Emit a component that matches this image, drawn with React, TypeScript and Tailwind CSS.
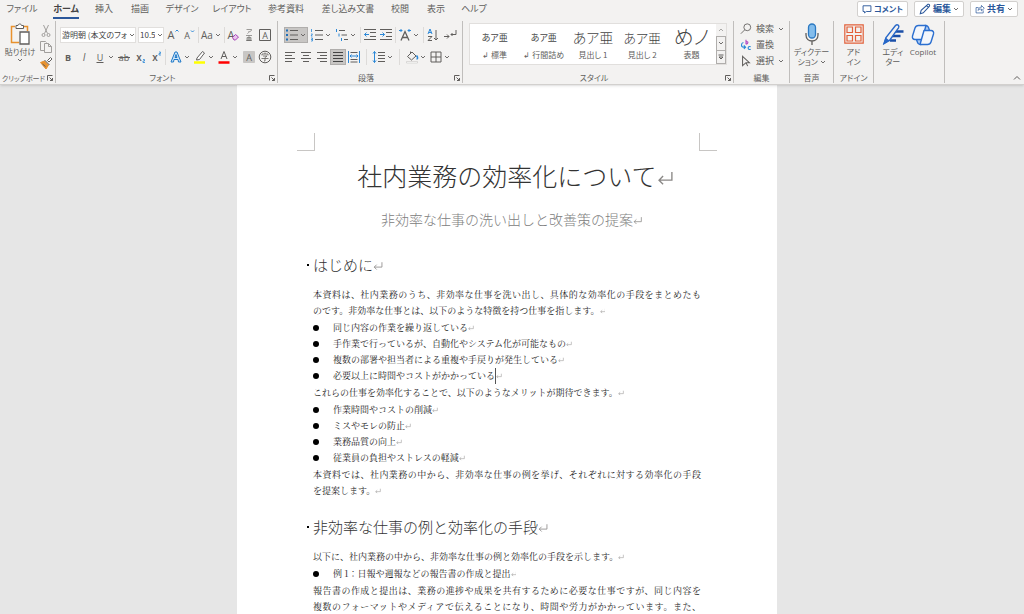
import type { ReactNode } from 'react';
import clsx from 'clsx';

const GRAY = '#605e5c';
const BLUE = '#2b88d8';

interface IconProps {
  children: ReactNode;
  className?: string;
  box?: string;
}

function Icon({ children, className = 'size-3.5', box = '0 0 14 14' }: IconProps) {
  return (
    <svg viewBox={box} className={clsx('shrink-0', className)} fill="none" stroke={GRAY} strokeWidth="1" aria-hidden="true">
      {children}
    </svg>
  );
}

function Chevron() {
  return (
    <Icon className="size-1.5" box="0 0 6 6">
      <path d="M1 2l2 2 2-2" strokeWidth=".9" />
    </Icon>
  );
}

interface ToolProps {
  label: string;
  children: ReactNode;
  menu?: boolean;
  active?: boolean;
}

function Tool({ label, children, menu, active }: ToolProps) {
  return (
    <button
      type="button"
      aria-label={label}
      className={clsx(
        'flex h-4 shrink-0 items-center',
        menu ? 'w-6' : 'w-4',
        active && 'bg-[#c8c6c4] ring-1 ring-inset ring-[#b0aeac]'
      )}
    >
      <span className="flex w-4 shrink-0 justify-center">{children}</span>
      {menu && <Chevron />}
    </button>
  );
}

function Sep() {
  return <span className="h-4 w-px shrink-0 bg-[#dddbd9]" />;
}

interface GroupProps {
  name?: string;
  launcher?: boolean;
  className: string;
  labelClass?: string;
  children: ReactNode;
}

function Group({ name, launcher, className, labelClass = 'text-[8px]', children }: GroupProps) {
  return (
    <section className={clsx('flex shrink-0 flex-col border-r border-[#c0bebc]', className)}>
      <div className="flex h-13 flex-col">{children}</div>
      <div className="flex h-2.5 items-center">
        <span className={clsx('min-w-0 flex-1 text-center leading-2.5 whitespace-nowrap', labelClass)}>{name}</span>
        {launcher && (
          <button type="button" aria-label={`${name}の設定`} className="mr-0.5 shrink-0">
            <Icon className="size-1.5" box="0 0 6 6">
              <path d="M.5 5.5v-5h5M2.5 2.5l3 3M5.5 3v2.5H3" />
            </Icon>
          </button>
        )}
      </div>
    </section>
  );
}

/* Letter glyphs used on the formatting buttons */
function Glyph({ children, className, x = 7 }: { children: ReactNode; className?: string; x?: number }) {
  return (
    <text x={x} y="10.5" textAnchor="middle" stroke="none" fill={GRAY} className={clsx('font-[Open_Sans]', className)}>
      {children}
    </text>
  );
}

function ClipboardGroup() {
  return (
    <Group name="クリップボード" launcher className="w-14" labelClass="text-[7px]">
      <div className="flex gap-1 pt-0.5 pl-1.5">
        <button type="button" className="flex w-7 flex-col items-center text-[8px] leading-2.5 whitespace-nowrap">
          <Icon className="h-6 w-5" box="0 0 20 24">
            <path d="M5 3.5H1.5v16H9M14 3.5h3.5V8" stroke="#e8912d" strokeWidth="1.5" />
            <path d="M6 5.5v-3h2C8 .5 11.500 .5 11.500 2.500h2v3z" fill="#fff" />
            <path d="M10 9h9v12h-9z" fill="#fff" strokeWidth="1.300" />
          </Icon>
          貼り付け
          <Chevron />
        </button>
        <div className="flex flex-col">
          <Tool label="切り取り">
            <Icon>
              <path d="M4.500 1l4 8.500M9.500 1l-4 8.500" stroke="#a19f9d" />
              <circle cx="4.500" cy="11" r="1.500" stroke="#a19f9d" />
              <circle cx="9.500" cy="11" r="1.500" stroke="#a19f9d" />
            </Icon>
          </Tool>
          <Tool label="コピー">
            <Icon>
              <path d="M5 10.500H1.500v-9h5l1 1M5.500 3.500h4l3 3v6h-7zM9.500 3.500v3h3" stroke="#a19f9d" />
            </Icon>
          </Tool>
          <Tool label="書式のコピー">
            <Icon>
              <path d="M8.500 4.500l3-3 1.500 1.500-3 3z" fill="#fff" />
              <path d="M1.500 6.500l4-1.500 4 4-2.500 4z" fill="#e8912d" stroke="#e8912d" />
              <path d="M5.500 4l5 5M3.500 8l3 2.500" stroke="#605e5c" />
            </Icon>
          </Tool>
        </div>
      </div>
    </Group>
  );
}

function Picker({ label, value, className }: { label: string; value: string; className: string }) {
  return (
    <div className={clsx('relative flex h-4 shrink-0', className)}>
      <select
        aria-label={label}
        className="h-4 w-full appearance-none overflow-hidden border border-[#e1dfdd] bg-white pr-2 pl-px text-[8px] leading-3.5 text-[#444]"
      >
        <option>{value}</option>
      </select>
      <span className="pointer-events-none absolute inset-y-px right-px flex items-center bg-white">
        <Chevron />
      </span>
    </div>
  );
}

function FontGroup() {
  return (
    <Group name="フォント" launcher className="w-[222px]">
      <div className="flex items-center justify-between pt-1.5 pr-1 pl-1">
        <div className="flex items-center gap-0.5">
          <Picker label="フォント名" value="游明朝 (本文のフォント)" className="w-19" />
          <Picker label="フォント サイズ" value="10.5" className="w-6.5" />
        </div>
        <Tool label="フォント サイズの拡大">
          <Icon>
            <Glyph x={5} className="text-[11px]">A</Glyph>
            <path d="M9.500 3.500l1.500-1.500 1.500 1.500" stroke={BLUE} />
          </Icon>
        </Tool>
        <Tool label="フォント サイズの縮小">
          <Icon>
            <Glyph x={5} className="text-[9px]">A</Glyph>
            <path d="M9 2.500l1.500 1.500 1.500-1.500" stroke={BLUE} />
          </Icon>
        </Tool>
        <Sep />
        <Tool label="文字種の変換" menu>
          <Icon>
            <Glyph className="text-[10px]">Aa</Glyph>
          </Icon>
        </Tool>
        <Sep />
        <div className="flex">
          <Tool label="書式のクリア">
            <Icon>
              <Glyph x={5} className="text-[11px]">A</Glyph>
              <path d="M6.500 9.500l3-3 3 2.500-3 3H8z" fill="#e9c6ee" stroke="#a846b8" />
            </Icon>
          </Tool>
          <Tool label="ルビ">
            <Icon>
              <path d="M4.500 1.500h5c0 1.500-1 2-2 2M7 3c0 1.500-.5 2-1.500 2.500M4 7.500h6M5 9.500h4v3H5zM5 11h4M7 7.500v5M4 12.500h6" strokeWidth=".6" />
            </Icon>
          </Tool>
          <Tool label="囲み線">
            <Icon>
              <path d="M1.500 1.500h11v11h-11z" />
              <Glyph className="text-[9px]">A</Glyph>
            </Icon>
          </Tool>
        </div>
      </div>
      <div className="flex items-center justify-between pt-1.5 pr-1 pl-1">
        <div className="flex">
          <Tool label="太字">
            <Icon><Glyph className="text-[9px] font-bold">B</Glyph></Icon>
          </Tool>
          <Tool label="斜体">
            <Icon><Glyph className="font-[Liberation_Serif] text-[10px] italic">I</Glyph></Icon>
          </Tool>
          <Tool label="下線" menu>
            <Icon>
              <Glyph className="text-[9px]">U</Glyph>
              <path d="M3.500 12.500h7" />
            </Icon>
          </Tool>
          <Tool label="取り消し線">
            <Icon>
              <Glyph className="text-[9px]">ab</Glyph>
              <path d="M1 7.500h12" />
            </Icon>
          </Tool>
          <Tool label="下付き">
            <Icon>
              <Glyph x={6} className="text-[10px] font-semibold">x</Glyph>
              <path d="M10 9.500h1.500v1.500H10v1.500h2" stroke={BLUE} strokeWidth=".8" />
            </Icon>
          </Tool>
          <Tool label="上付き">
            <Icon>
              <Glyph x={6} className="text-[10px] font-semibold">x</Glyph>
              <path d="M10 2h1.500v1.500H10V5h2" stroke={BLUE} strokeWidth=".8" />
            </Icon>
          </Tool>
        </div>
        <Sep />
        <div className="flex">
          <Tool label="文字の効果と体裁" menu>
            <Icon>
              <path d="M2 12L6 2h2l4 10H9.500L9 9.500H5L4.500 12zM6 7.500h2L7 4.500z" fill="#cfe6f8" stroke="#1f78c8" />
            </Icon>
          </Tool>
          <Tool label="蛍光ペンの色" menu>
            <Icon>
              <path d="M4 8l5.500-6.500 2 1.500L6.500 9.500 3.500 10z" fill="#fff" />
              <path d="M1 12.500h11" stroke="#ffff00" strokeWidth="2.500" />
            </Icon>
          </Tool>
          <Tool label="フォントの色" menu>
            <Icon>
              <path d="M4 9l3-7.500L10 9M5 6.500h4" />
              <path d="M1.500 12.500h11" stroke="#ff0000" strokeWidth="2.500" />
            </Icon>
          </Tool>
        </div>
        <div className="flex">
          <Tool label="文字の網かけ">
            <Icon>
              <path d="M1.500 1.500h11v11h-11z" fill="#c8c6c4" stroke="#c8c6c4" />
              <Glyph className="text-[9px]">A</Glyph>
            </Icon>
          </Tool>
          <Tool label="囲い文字">
            <Icon>
              <circle cx="7" cy="7" r="5.800" />
              <path d="M7 2.500V4M4 5.500V4h6v1.500M5 6h4L7 7.500V11H6M3.500 8.500h7" strokeWidth=".8" />
            </Icon>
          </Tool>
        </div>
      </div>
    </Group>
  );
}

function ParagraphGroup() {
  return (
    <Group name="段落" launcher className="w-[185px]">
      <div className="flex items-center justify-between pt-1.5 pr-1 pl-1.5">
        <Tool label="箇条書き" menu active>
          <Icon>
            <path d="M5 2.500h8M5 7h8M5 11.500h8" />
            <path d="M1 2.500h2M1 7h2M1 11.500h2" stroke="#1f6fb8" strokeWidth="2" />
          </Icon>
        </Tool>
        <Tool label="段落番号" menu>
          <Icon>
            <path d="M5 2.500h8M5 7h8M5 11.500h8" />
            <path d="M1.500 1v3M1 6h1.500L1 8h1.500M1 10h1.500v3H1M1 11.500h1" stroke={BLUE} strokeWidth=".8" />
          </Icon>
        </Tool>
        <Tool label="アウトライン" menu>
          <Icon>
            <path d="M4 2.500h6M6.500 7H12M9 11.500h4" />
            <path d="M1.500 1v3M4 5.500v3M6.500 10v3" stroke={BLUE} />
          </Icon>
        </Tool>
        <Sep />
        <div className="flex">
          <Tool label="インデントを減らす">
            <Icon>
              <path d="M1 1.500h12M7 4.500h6M7 8.500h6M1 11.500h12" />
              <path d="M6 6.500H1.500M3.500 4.500l-2 2 2 2" stroke={BLUE} />
            </Icon>
          </Tool>
          <Tool label="インデントを増やす">
            <Icon>
              <path d="M1 1.500h12M7 4.500h6M7 8.500h6M1 11.500h12" />
              <path d="M1 6.500h4.500M3.500 4.500l2 2-2 2" stroke={BLUE} />
            </Icon>
          </Tool>
        </div>
        <Sep />
        <Tool label="拡張書式" menu>
          <Icon>
            <path d="M3 12.500l4-9 4 9M4.500 9.500h5" strokeWidth="1.300" />
            <path d="M1 2.500h3M2.500 1L4 2.500 2.500 4M13 2.500h-3M11.500 1L10 2.500 11.500 4" stroke={BLUE} />
          </Icon>
        </Tool>
        <Sep />
        <Tool label="並べ替え">
          <Icon>
            <path d="M2 6l2-5 2 5M2.800 4.500h2.500" stroke={BLUE} />
            <path d="M2 8.500h4L2 12.500h4M10 2v10M8 10l2 2 2-2" />
          </Icon>
        </Tool>
        <Tool label="編集記号の表示">
          <Icon>
            <path d="M1 8.500h5M4 6.500l2 2-2 2M13 2v4.500H8M9.500 5L8 6.500 9.500 8" />
          </Icon>
        </Tool>
      </div>
      <div className="flex items-center gap-1 pt-1.5 pl-1">
        <div className="flex">
          <Tool label="左揃え">
            <Icon><path d="M2 2.500h10M2 5.500h7M2 8.500h10M2 11.500h7" /></Icon>
          </Tool>
          <Tool label="中央揃え">
            <Icon><path d="M2 2.500h10M4 5.500h6M2 8.500h10M4 11.500h6" /></Icon>
          </Tool>
          <Tool label="右揃え">
            <Icon><path d="M2 2.500h10M5 5.500h7M2 8.500h10M5 11.500h7" /></Icon>
          </Tool>
          <Tool label="両端揃え" active>
            <Icon><path d="M2 2.500h10M2 5.500h10M2 8.500h10M2 11.500h10" stroke="#444" /></Icon>
          </Tool>
          <Tool label="均等割り付け">
            <Icon>
              <path d="M3.500 2.500h7M3.500 9.500h7M3.500 12h7" />
              <path d="M1.500 1v12M12.500 1v12M3 6h8M4.500 4.500L3 6l1.500 1.500M9.500 4.500L11 6 9.500 7.500" stroke={BLUE} />
            </Icon>
          </Tool>
        </div>
        <Sep />
        <Tool label="行と段落の間隔" menu>
          <Icon>
            <path d="M6 2.500h7M6 5.500h7M6 8.500h7M6 11.500h7" />
            <path d="M2.500 1.500v11M1 3.500l1.500-2L4 3.500M1 10.500l1.500 2 1.500-2" stroke={BLUE} />
          </Icon>
        </Tool>
        <Sep />
        <div className="flex">
          <Tool label="塗りつぶし" menu>
            <Icon>
              <path d="M2.500 6.500L7 2l4 4-4.500 4zM5.500 3.500V1.500" />
              <path d="M11.500 5.500c1.500 2 1.500 3.500 0 3.500" stroke={BLUE} strokeWidth="1.500" />
              <path d="M1.500 11.500h11v1.500h-11z" fill="#fff" stroke="#c8c6c4" strokeWidth=".6" />
            </Icon>
          </Tool>
          <Tool label="罫線" menu>
            <Icon>
              <path d="M2 2h10v10H2zM7 2v10M2 7h10" />
            </Icon>
          </Tool>
        </div>
      </div>
    </Group>
  );
}

const STYLES = [
  { name: '↲ 標準', sample: 'あア亜', look: 'text-[9px]' },
  { name: '↲ 行間詰め', sample: 'あア亜', look: 'text-[9px]' },
  { name: '見出し 1', sample: 'あア亜', look: 'text-[14px] font-light' },
  { name: '見出し 2', sample: 'あア亜', look: 'text-[13px] font-light' },
  { name: '表題', sample: 'めノ', look: 'text-[20px] font-light' },
];

function StylesGroup() {
  return (
    <Group name="スタイル" launcher className="w-[271px]">
      <div className="mx-1.5 mt-0.5 flex h-10.5 border border-[#e1dfdd] bg-white">
        <div className="grid min-w-0 flex-1 grid-cols-5">
          {STYLES.map((style) => (
            <button type="button" key={style.name} className="flex flex-col items-center whitespace-nowrap">
              <span className="flex h-6.5 items-center text-[#444]">
                <span className={clsx('leading-none', style.look)}>{style.sample}</span>
              </span>
              <span className="text-[8px] leading-2.5">{style.name}</span>
            </button>
          ))}
        </div>
        <div className="flex w-2.5 flex-col bg-[#f3f2f1]">
          <button type="button" aria-label="前の行" className="flex flex-1 items-center justify-center opacity-50">
            <Icon className="size-1.5" box="0 0 6 6"><path d="M1 4l2-2 2 2" /></Icon>
          </button>
          <button type="button" aria-label="次の行" className="flex flex-1 items-center justify-center border border-[#b0aeac]">
            <Chevron />
          </button>
          <button type="button" aria-label="その他" className="flex flex-1 items-center justify-center border border-t-0 border-[#b0aeac]">
            <Icon className="size-1.5" box="0 0 6 6"><path d="M.5 1h5M1 3h4L3 5z" /></Icon>
          </button>
        </div>
      </div>
    </Group>
  );
}

function EditGroup() {
  const row = 'flex h-4 items-center gap-1 text-[9px] whitespace-nowrap';
  return (
    <Group name="編集" className="w-14">
      <div className="flex flex-col pl-1.5">
        <button type="button" className={row}>
          <Icon className="size-3">
            <circle cx="8.500" cy="5" r="4" />
            <path d="M5.500 8L1 12.500" />
          </Icon>
          検索
          <Chevron />
        </button>
        <button type="button" className={row}>
          <Icon className="size-3">
            <path d="M7 1v5M7 3.500c3-1.500 3 2.500 0 2.500" stroke="#b146c2" strokeWidth="1.300" />
            <path d="M4 4C1 4.500 1 9.500 4 9.500h2M4.500 7.500l2 2-2 2M12.500 9c-4-1.500-4 4.500 0 3" stroke={BLUE} strokeWidth="1.300" />
          </Icon>
          置換
        </button>
        <button type="button" className={row}>
          <Icon className="size-3">
            <path d="M3 1.500l8 7.500H7l-4 3.500zM7 9l2 4" strokeWidth="1.200" />
          </Icon>
          選択
          <Chevron />
        </button>
      </div>
    </Group>
  );
}

const bigButton = 'flex flex-col items-center pt-0.5 text-[8px] leading-2.5 whitespace-nowrap';

function BigGroups() {
  return (
    <>
      <Group name="音声" className="w-11">
        <button type="button" className={bigButton}>
          <Icon className="h-6 w-5" box="0 0 20 24">
            <path d="M4 10v2c0 8 12 8 12 0v-2M10 18v4" strokeWidth="1.300" />
            <rect x="6.500" y="1" width="7" height="14" rx="3.500" fill="#83bdec" stroke="#2b79c2" strokeWidth="1.300" />
          </Icon>
          <span>ディクテー</span>
          <span className="flex items-center gap-0.5">ション <Chevron /></span>
        </button>
      </Group>
      <Group name="アドイン" className="w-10">
        <button type="button" className={bigButton}>
          <Icon className="h-6 w-5" box="0 0 20 24">
            <path
              d="M.8 1.800h18.400v18.400H.8zM3 4h5.500v5.500H3zM11.500 4H17v5.500h-5.500zM3 12.500h5.500V18H3zM11.500 12.500H17V18h-5.500z"
              stroke="#e2603a"
              strokeWidth="1.200"
            />
          </Icon>
          <span>アド</span>
          <span>イン</span>
        </button>
      </Group>
      <Group className="w-[71px]">
        <div className="flex justify-center gap-1.5">
          <button type="button" className={bigButton}>
            <Icon className="h-6 w-5.5" box="0 0 22 24">
              <path d="M12 8.500h9.500M10 13h8.500M8 17.500h6" stroke="#1b4fa8" strokeWidth="2.600" />
              <path d="M2 20.500l2-6L13.500 2.500c1.800-1.800 4.300 0 3 2.300L7.500 17.500z" fill="#f3f2f1" stroke="#2868c8" strokeWidth="1.400" />
              <path d="M1 22l2.500-7.500 4 3z" fill="#2868c8" stroke="none" />
            </Icon>
            <span>エディ</span>
            <span>ター</span>
          </button>
          <button type="button" className={bigButton}>
            <Icon className="h-6 w-6" box="0 0 24 24">
              <g stroke="#2b6fd0" strokeWidth="1.400" strokeLinejoin="round">
                <path d="M14 2.500c3 0 3.500 1.500 4.500 5l-5.500 1z" fill="#a9c9f2" />
                <path d="M10 21.500c-3 0-3.500-1.500-4.500-5l5.500-1z" fill="#a9c9f2" />
                <path d="M7.500 2.500H15l-4 14H4c-2 0-3-1.500-2.500-3.500L4 5c.5-1.500 2-2.500 3.500-2.500z" fill="#f3f6fb" />
                <path d="M16.500 21.500H9l4-14h7c2 0 3 1.500 2.500 3.500L20 19c-.5 1.500-2 2.500-3.500 2.500z" fill="#f3f6fb" />
              </g>
            </Icon>
            <span className="font-[Open_Sans]">Copilot</span>
          </button>
        </div>
      </Group>
    </>
  );
}

const TABS = [
  { name: 'ファイル', width: 'w-11' },
  { name: 'ホーム', width: 'w-11', active: true },
  { name: '挿入', width: 'w-8' },
  { name: '描画', width: 'w-10' },
  { name: 'デザイン', width: 'w-11' },
  { name: 'レイアウト', width: 'w-14' },
  { name: '参考資料', width: 'w-13' },
  { name: '差し込み文書', width: 'w-18' },
  { name: '校閲', width: 'w-8' },
  { name: '表示', width: 'w-10' },
  { name: 'ヘルプ', width: 'w-9' },
];

function TabBar() {
  const action = 'flex h-4 items-center gap-0.5 rounded-xs border border-[#d2d0ce] bg-white px-1 font-bold text-[#2b579a]';
  return (
    <div className="flex items-start justify-between pr-1.5">
      <nav className="flex">
        {TABS.map((tab) => (
          <button type="button" key={tab.name} className={clsx('flex h-4.5 justify-center whitespace-nowrap', tab.width)}>
            <span
              className={clsx(
                'border-b-2 text-[9px] leading-4',
                tab.active ? 'border-[#2b579a] font-bold text-[#444]' : 'border-transparent'
              )}
            >
              {tab.name}
            </span>
          </button>
        ))}
      </nav>
      <div className="flex gap-1.5">
        <button type="button" className={clsx(action, 'text-[8px]')}>
          <Icon className="size-2.5">
            <path d="M1.500 2.500h11v8H6l-2.500 2v-2h-2z" stroke="#2b579a" strokeWidth="1.300" />
          </Icon>
          コメント
        </button>
        <button type="button" className={clsx(action, 'text-[9px]')}>
          <Icon className="size-3">
            <path d="M1.500 12.500l1-4 8-7c1.500-.5 2.500 1 1.500 2.500l-7 7.500zM9 3l2.500 2.500" stroke="#2b579a" strokeWidth="1.200" />
          </Icon>
          編集
          <Chevron />
        </button>
        <button type="button" className={clsx(action, 'text-[9px]')}>
          <Icon className="size-2.5">
            <path d="M5 5H1.500v7.500h10V9M4.500 9c0-3 2-4.500 4.500-4.500V2l4 4-4 3.500V7C7 7 5.500 7.500 4.500 9z" stroke="#2b579a" />
          </Icon>
          共有
          <Chevron />
        </button>
      </div>
    </div>
  );
}

function Ribbon() {
  return (
    <header className="z-10 shrink-0 border-b border-[#d2d0ce] bg-[#f3f2f1] pt-px pb-px text-[#605e5c] shadow-sm [font-feature-settings:'palt']">
      <TabBar />
      <div className="flex pt-0.5">
        <ClipboardGroup />
        <FontGroup />
        <ParagraphGroup />
        <StylesGroup />
        <EditGroup />
        <BigGroups />
        <button type="button" aria-label="リボンを折りたたむ" className="mr-0.5 ml-auto self-end">
          <Icon className="size-2.5" box="0 0 10 10"><path d="M2 6.500l3-3 3 3" /></Icon>
        </button>
      </div>
    </header>
  );
}

function Return() {
  return (
    <span className="inline-block w-0 whitespace-nowrap">
      <svg viewBox="0 0 12 12" className="inline-block size-[.65em] max-w-none align-baseline" fill="none" stroke="#8a8886" aria-hidden="true">
        <path d="M11 1.500v6H1.500M4.500 4.500l-3 3 3 3" />
      </svg>
    </span>
  );
}

function FullLine({ children }: { children: ReactNode }) {
  return <span className="block [text-align-last:justify]">{children}</span>;
}

function Bullets({ items, caretAt }: { items: string[]; caretAt?: number }) {
  return (
    <ul>
      {items.map((item, idx) => (
        <li key={item} className="flex items-center">
          <span className="mr-3.5 size-1.5 shrink-0 rounded-full bg-black" />
          <span className="flex items-center">
            {item}
            {idx === caretAt && <span className="h-4 w-px bg-[#555]" />}
            <Return />
          </span>
        </li>
      ))}
    </ul>
  );
}

function Heading({ children }: { children: ReactNode }) {
  return (
    <h2 className="-ml-1.5 flex items-center text-[15px] leading-6 font-light text-[#333]">
      <span className="mr-1 size-0.5 shrink-0 bg-black" />
      <span>
        {children}
        <Return />
      </span>
    </h2>
  );
}

function DocumentPage() {
  return (
    <article className="mx-auto min-h-full w-full max-w-[540px] bg-white px-19 pt-12">
      <div className="-mx-4 flex justify-between">
        <span className="size-4.5 border-r border-b border-[#c8c6c4]" />
        <span className="size-4.5 border-b border-l border-[#c8c6c4]" />
      </div>
      <h1 className="mt-1 text-center text-[25px] leading-10 font-light text-[#333]">
        社内業務の効率化について
        <Return />
      </h1>
      <p className="mt-3 text-center text-[14px] leading-6 font-light text-[#808080]">
        非効率な仕事の洗い出しと改善策の提案
        <Return />
      </p>
      <div className="mt-5.5">
        <Heading>はじめに</Heading>
      </div>
      <div className="mt-2.5 flex flex-col gap-px font-['Noto_Serif_CJK_JP','Noto_Sans_CJK_JP',serif] text-[9px] leading-4 text-[#222]">
        <p>
          <FullLine>本資料は、社内業務のうち、非効率な仕事を洗い出し、具体的な効率化の手段をまとめたも</FullLine>
          のです。非効率な仕事とは、以下のような特徴を持つ仕事を指します。
          <Return />
        </p>
        <Bullets
          caretAt={3}
          items={[
            '同じ内容の作業を繰り返している',
            '手作業で行っているが、自動化やシステム化が可能なもの',
            '複数の部署や担当者による重複や手戻りが発生している',
            '必要以上に時間やコストがかかっている',
          ]}
        />
        <p>
          これらの仕事を効率化することで、以下のようなメリットが期待できます。
          <Return />
        </p>
        <Bullets items={['作業時間やコストの削減', 'ミスやモレの防止', '業務品質の向上', '従業員の負担やストレスの軽減']} />
        <p>
          <FullLine>本資料では、社内業務の中から、非効率な仕事の例を挙げ、それぞれに対する効率化の手段</FullLine>
          を提案します。
          <Return />
        </p>
      </div>
      <div className="mt-4">
        <Heading>非効率な仕事の例と効率化の手段</Heading>
      </div>
      <div className="mt-2.5 flex flex-col gap-px font-['Noto_Serif_CJK_JP','Noto_Sans_CJK_JP',serif] text-[9px] leading-4 text-[#222]">
        <p>
          以下に、社内業務の中から、非効率な仕事の例と効率化の手段を示します。
          <Return />
        </p>
        <Bullets items={['例 1：日報や週報などの報告書の作成と提出']} />
        <p>
          <FullLine>報告書の作成と提出は、業務の進捗や成果を共有するために必要な仕事ですが、同じ内容を</FullLine>
          <FullLine>複数のフォーマットやメディアで伝えることになり、時間や労力がかかっています。また、</FullLine>
        </p>
      </div>
    </article>
  );
}

export default function App() {
  return (
    <div className="flex h-screen flex-col overflow-hidden bg-[#e6e6e6] font-['Noto_Sans_CJK_JP',sans-serif]">
      <Ribbon />
      <main className="min-h-0 flex-1 overflow-hidden pr-2.5">
        <DocumentPage />
      </main>
    </div>
  );
}
